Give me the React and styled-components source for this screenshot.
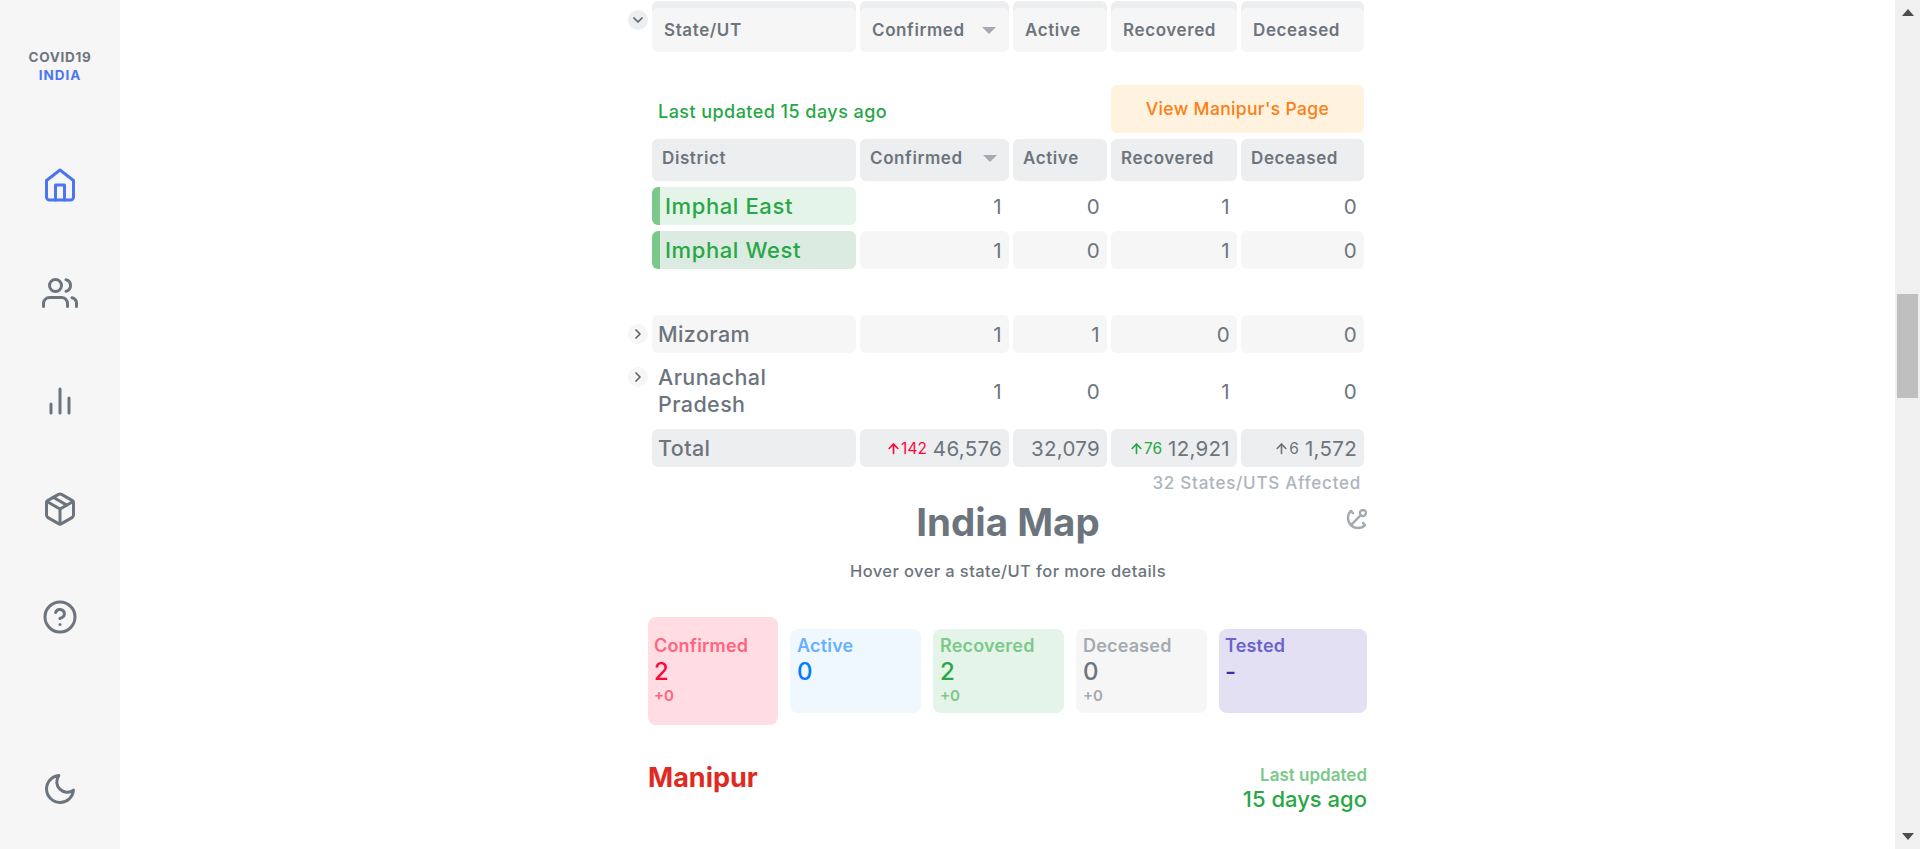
import styled, { createGlobalStyle } from "styled-components";

const GlobalStyle = createGlobalStyle`
  html, body {
    margin: 0;
    padding: 0;
    height: 100%;
    overflow: hidden;
    background: #fff;
  }
  * { box-sizing: border-box; }
  body {
    font-family: Inter, "Noto Sans", sans-serif;
    color: #6c757d;
  }
`;

const Page = styled.div`
  display: flex;
  width: 1920px;
  height: 849px;
  overflow: hidden;
`;

/* sidebar */
const Sidebar = styled.aside`
  flex: none;
  width: 120px;
  height: 100%;
  background: #f6f6f7;
  display: flex;
  flex-direction: column;
  align-items: center;
  padding: 48px 0 6px;
`;

const Logo = styled.div`
  height: 36px;
  margin-bottom: 47px;
  text-align: center;
  font-size: 13.5px;
  line-height: 18px;
  font-weight: 700;
  letter-spacing: 0.7px;
  color: #6c757d;
  span {
    display: block;
    letter-spacing: 1px;
    color: #4c75f2;
  }
`;

const NavItem = styled.div`
  flex: none;
  height: 108px;
  display: flex;
  align-items: center;
  justify-content: center;
  color: ${(p) => (p.$active ? "#4c75f2" : "#6c757d")};
  margin-top: ${(p) => (p.$bottom ? "auto" : "0")};
`;

const Icon = ({ size = 36, children, rotate, weight = 2 }) => (
  <svg
    width={size}
    height={size}
    viewBox="0 0 24 24"
    fill="none"
    stroke="currentColor"
    strokeWidth={weight}
    strokeLinecap="round"
    strokeLinejoin="round"
    transform={rotate ? `rotate(${rotate})` : undefined}
  >
    {children}
  </svg>
);

/* main column */
const Main = styled.main`
  flex: 1;
  min-width: 0;
  padding-left: 508px;
`;

const Row = styled.div`
  display: grid;
  grid-template-columns: 20px 204px 149px 94px 126px 123px;
  column-gap: 4px;
  width: 736px;
  margin-top: ${(p) => p.$top || 0}px;
  height: ${(p) => p.$height}px;
`;

const Toggle = styled.div`
  width: 20px;
  height: 20px;
  margin-top: ${(p) => p.$top || 0}px;
  border-radius: 50%;
  background: ${(p) => (p.$open ? "#edeef0" : "#f6f6f7")};
  color: #5b636b;
  display: flex;
  align-items: center;
  justify-content: center;
`;

const StickyCell = styled.div`
  background: #edeef0;
  border-radius: 6px;
  padding-top: 7px;
  height: 100%;
`;

const StickyInner = styled.div`
  height: 100%;
  background: #f6f6f7;
  border-radius: 6px;
  display: flex;
  align-items: center;
  justify-content: space-between;
  padding: 0 12px;
  font-size: 17px;
  font-weight: 600;
  letter-spacing: 0.6px;
  color: #6c757d;
`;

const HeadCell = styled.div`
  background: #edeef0;
  border-radius: 6px;
  display: flex;
  align-items: center;
  justify-content: space-between;
  padding: 0 11px 4px 10px;
  font-size: 17px;
  font-weight: 600;
  letter-spacing: 0.6px;
  color: #6c757d;
`;

const SortCaret = styled.i`
  width: 0;
  height: 0;
  margin-right: 1px;
  border-left: 7px solid transparent;
  border-right: 7px solid transparent;
  border-top: 7px solid #a5aab0;
`;

const NameCell = styled.div`
  border-radius: 6px;
  display: flex;
  align-items: center;
  padding: 0 6px;
  font-size: 21.5px;
  line-height: 27px;
  letter-spacing: 0.4px;
  font-weight: 500;
  color: #6c757d;
  background: ${(p) => p.$bg || "transparent"};
`;

const DistrictCell = styled(NameCell)`
  border-left: 8px solid #7bc98a;
  padding-left: 5px;
  font-size: 22px;
  letter-spacing: 0.6px;
  color: #28a745;
  background: ${(p) => p.$bg};
`;

const NumCell = styled.div`
  border-radius: 6px;
  display: flex;
  align-items: center;
  justify-content: flex-end;
  gap: 6px;
  padding: 0 7px;
  font-size: 20.5px;
  letter-spacing: 0.3px;
  font-weight: 400;
  color: #6c757d;
  background: ${(p) => p.$bg || "transparent"};
`;

const Delta = styled.span`
  display: flex;
  align-items: center;
  font-size: 15.5px;
  letter-spacing: 0;
  color: ${(p) => p.$color};
  svg {
    margin-right: 1px;
  }
`;

const UpdatedLine = styled.div`
  grid-column: 2 / span 3;
  align-self: center;
  padding: 4px 0 0 6px;
  font-size: 18px;
  font-weight: 500;
  color: #28a745;
  letter-spacing: 0.45px;
`;

const PageButton = styled.div`
  grid-column: 5 / span 2;
  background: #fff3e0;
  border-radius: 6px;
  display: flex;
  align-items: center;
  justify-content: center;
  padding-bottom: 2px;
  font-size: 17.5px;
  font-weight: 500;
  letter-spacing: 0.35px;
  color: #fd7e14;
`;

const Affected = styled.div`
  width: 736px;
  height: 24px;
  padding-right: 3px;
  margin-top: 4px;
  text-align: right;
  font-size: 17px;
  line-height: 24px;
  font-weight: 500;
  letter-spacing: 0.75px;
  color: #adb5bd;
`;

const MapHead = styled.div`
  position: relative;
  width: 720px;
  margin-left: 20px;
  text-align: center;
`;

const MapTitle = styled.h1`
  margin: 0;
  padding-top: 5px;
  font-size: 38.5px;
  line-height: 44px;
  font-weight: 700;
  color: #6c757d;
`;

const AnchorBtn = styled.div`
  position: absolute;
  right: -2px;
  top: 11px;
  color: #a5aab0;
  display: flex;
`;

const Hint = styled.div`
  margin-top: 17px;
  font-size: 16.5px;
  line-height: 20px;
  font-weight: 500;
  letter-spacing: 0.4px;
  color: #6c757d;
`;

const Cards = styled.div`
  display: flex;
  align-items: center;
  gap: 12px;
  width: 719px;
  height: 108px;
  margin: 36px 0 0 20px;
`;

const Card = styled.div`
  flex: 0 0 ${(p) => (p.$wide ? 148 : p.$big ? 130 : 131)}px;
  height: ${(p) => (p.$big ? 108 : 84)}px;
  padding: ${(p) => (p.$big ? 19 : 7)}px 6px 0 ${(p) => (p.$big || p.$wide ? 6 : 7)}px;
  border-radius: 8px;
  background: ${(p) => p.$bg};
`;

const CardLabel = styled.div`
  font-size: 18px;
  line-height: 20px;
  font-weight: 600;
  letter-spacing: 0.2px;
  color: ${(p) => p.$color};
`;

const CardValue = styled.div`
  font-size: 24px;
  line-height: 28px;
  margin-top: 2px;
  font-weight: 500;
  color: ${(p) => p.$color};
`;

const CardDelta = styled.div`
  font-size: 15px;
  line-height: 20px;
  font-weight: 600;
  color: ${(p) => p.$color};
`;

const StateRow = styled.div`
  display: flex;
  justify-content: space-between;
  align-items: flex-start;
  width: 719px;
  margin: 39px 0 0 20px;
`;

const StateName = styled.h2`
  margin: -3px 0 0;
  font-size: 27px;
  line-height: 34px;
  font-weight: 700;
  color: #e0291f;
`;

const Updated = styled.div`
  text-align: right;
  font-size: 17px;
  line-height: 22px;
  font-weight: 600;
  color: #7bc98a;
  strong {
    display: block;
    font-size: 22px;
    line-height: 26px;
    font-weight: 500;
    color: #28a745;
  }
`;

/* scrollbar drawn from the screenshot */
const ScrollTrack = styled.div`
  flex: none;
  width: 25px;
  height: 100%;
  background: #f0f0f0;
  display: flex;
  flex-direction: column;
  align-items: center;
  padding-top: 9px;
`;

const ArrowUpTip = styled.i`
  width: 0;
  height: 0;
  border-left: 6px solid transparent;
  border-right: 6px solid transparent;
  border-bottom: 7px solid #4d4d4d;
`;

const ArrowDownTip = styled.i`
  width: 0;
  height: 0;
  margin-top: auto;
  margin-bottom: 9px;
  border-left: 6px solid transparent;
  border-right: 6px solid transparent;
  border-top: 7px solid #4d4d4d;
`;

const Thumb = styled.div`
  width: 21px;
  height: 104px;
  margin-top: 278px;
  background: #bfbfbf;
`;

const Chevron = ({ open }) => (
  <svg width="16" height="16" viewBox="0 0 24 24" fill="none" stroke="currentColor" strokeWidth="2.6" strokeLinecap="round" strokeLinejoin="round">
    <polyline points={open ? "6 9 12 15 18 9" : "9 6 15 12 9 18"} />
  </svg>
);

const SmallUp = ({ size = 13 }) => (
  <svg width={size} height={size} viewBox="0 0 24 24" fill="none" stroke="currentColor" strokeWidth="3" strokeLinecap="round" strokeLinejoin="round">
    <line x1="12" y1="21" x2="12" y2="4" />
    <polyline points="4 12 12 4 20 12" />
  </svg>
);

const districts = [
  { name: "Imphal East", nameBg: "#e4f4e8", numBg: "transparent" },
  { name: "Imphal West", nameBg: "#dcebe1", numBg: "#f6f6f7" },
];

const stats = [
  { label: "Confirmed", value: "2", delta: "+0", bg: "#ffdde3", soft: "#ff6480", strong: "#ff073a", big: true },
  { label: "Active", value: "0", bg: "#eff7ff", soft: "#66b0ff", strong: "#007bff" },
  { label: "Recovered", value: "2", delta: "+0", bg: "#e4f4e8", soft: "#7bc98a", strong: "#28a745" },
  { label: "Deceased", value: "0", delta: "+0", bg: "#f6f6f7", soft: "#a5aab1", strong: "#6c757d" },
  { label: "Tested", value: "-", bg: "#e2e0f2", soft: "#6b63c9", strong: "#4327b5", wide: true },
];

const App = () => {
  return (
    <Page>
      <GlobalStyle />
      <Sidebar>
        <Logo>
          COVID19<span>INDIA</span>
        </Logo>
        <NavItem $active>
          <Icon>
            <path d="M3 9l9-7 9 7v11a2 2 0 0 1-2 2H5a2 2 0 0 1-2-2z" />
            <polyline points="9 22 9 12 15 12 15 22" />
          </Icon>
        </NavItem>
        <NavItem>
          <Icon>
            <path d="M17 21v-2a4 4 0 0 0-4-4H5a4 4 0 0 0-4 4v2" />
            <circle cx="9" cy="7" r="4" />
            <path d="M23 21v-2a4 4 0 0 0-3-3.87" />
            <path d="M16 3.13a4 4 0 0 1 0 7.75" />
          </Icon>
        </NavItem>
        <NavItem>
          <Icon>
            <line x1="18" y1="20" x2="18" y2="10" />
            <line x1="12" y1="20" x2="12" y2="4" />
            <line x1="6" y1="20" x2="6" y2="14" />
          </Icon>
        </NavItem>
        <NavItem>
          <Icon>
            <line x1="16.5" y1="9.4" x2="7.5" y2="4.21" />
            <path d="M21 16V8a2 2 0 0 0-1-1.73l-7-4a2 2 0 0 0-2 0l-7 4A2 2 0 0 0 3 8v8a2 2 0 0 0 1 1.73l7 4a2 2 0 0 0 2 0l7-4A2 2 0 0 0 21 16z" />
            <polyline points="3.27 6.96 12 12.01 20.73 6.96" />
            <line x1="12" y1="22.08" x2="12" y2="12" />
          </Icon>
        </NavItem>
        <NavItem>
          <Icon>
            <circle cx="12" cy="12" r="10" />
            <path d="M9.09 9a3 3 0 0 1 5.83 1c0 2-3 3-3 3" />
            <line x1="12" y1="17" x2="12.01" y2="17" />
          </Icon>
        </NavItem>
        <NavItem $bottom>
          <Icon>
            <path d="M21 12.79A9 9 0 1 1 11.21 3 7 7 0 0 0 21 12.79z" />
          </Icon>
        </NavItem>
      </Sidebar>

      <Main>
        <Row $top={1} $height={51}>
          <Toggle $open $top={9}>
            <Chevron open />
          </Toggle>
          <StickyCell>
            <StickyInner>State/UT</StickyInner>
          </StickyCell>
          <StickyCell>
            <StickyInner>
              Confirmed
              <SortCaret />
            </StickyInner>
          </StickyCell>
          <StickyCell>
            <StickyInner>Active</StickyInner>
          </StickyCell>
          <StickyCell>
            <StickyInner>Recovered</StickyInner>
          </StickyCell>
          <StickyCell>
            <StickyInner>Deceased</StickyInner>
          </StickyCell>
        </Row>

        <Row $top={33} $height={48}>
          <span />
          <UpdatedLine>Last updated 15 days ago</UpdatedLine>
          <PageButton>View Manipur's Page</PageButton>
        </Row>

        <Row $top={6} $height={42}>
          <span />
          <HeadCell>District</HeadCell>
          <HeadCell>
            Confirmed
            <SortCaret />
          </HeadCell>
          <HeadCell>Active</HeadCell>
          <HeadCell>Recovered</HeadCell>
          <HeadCell>Deceased</HeadCell>
        </Row>

        {districts.map((d) => (
          <Row key={d.name} $top={6} $height={38}>
            <span />
            <DistrictCell $bg={d.nameBg}>{d.name}</DistrictCell>
            <NumCell $bg={d.numBg}>1</NumCell>
            <NumCell $bg={d.numBg}>0</NumCell>
            <NumCell $bg={d.numBg}>1</NumCell>
            <NumCell $bg={d.numBg}>0</NumCell>
          </Row>
        ))}

        <Row $top={46} $height={38}>
          <Toggle $top={9}>
            <Chevron />
          </Toggle>
          <NameCell $bg="#f6f6f7">Mizoram</NameCell>
          <NumCell $bg="#f6f6f7">1</NumCell>
          <NumCell $bg="#f6f6f7">1</NumCell>
          <NumCell $bg="#f6f6f7">0</NumCell>
          <NumCell $bg="#f6f6f7">0</NumCell>
        </Row>

        <Row $top={4} $height={68}>
          <Toggle $top={10}>
            <Chevron />
          </Toggle>
          <NameCell>
            Arunachal
            <br />
            Pradesh
          </NameCell>
          <NumCell>1</NumCell>
          <NumCell>0</NumCell>
          <NumCell>1</NumCell>
          <NumCell>0</NumCell>
        </Row>

        <Row $top={4} $height={38}>
          <span />
          <NameCell $bg="#edeef0">Total</NameCell>
          <NumCell $bg="#edeef0">
            <Delta $color="#ff073a">
              <SmallUp />
              142
            </Delta>
            46,576
          </NumCell>
          <NumCell $bg="#edeef0">32,079</NumCell>
          <NumCell $bg="#edeef0">
            <Delta $color="#28a745">
              <SmallUp />
              76
            </Delta>
            12,921
          </NumCell>
          <NumCell $bg="#edeef0">
            <Delta $color="#6c757d">
              <SmallUp />6
            </Delta>
            1,572
          </NumCell>
        </Row>

        <Affected>32 States/UTS Affected</Affected>

        <MapHead>
          <MapTitle>India Map</MapTitle>
          <AnchorBtn>
            <Icon size={24} rotate={45} weight={2.4}>
              <circle cx="12" cy="5" r="3" />
              <line x1="12" y1="22" x2="12" y2="8" />
              <path d="M5 12H2a10 10 0 0 0 20 0h-3" />
            </Icon>
          </AnchorBtn>
          <Hint>Hover over a state/UT for more details</Hint>
        </MapHead>

        <Cards>
          {stats.map((s) => (
            <Card key={s.label} $bg={s.bg} $big={s.big} $wide={s.wide}>
              <CardLabel $color={s.soft}>{s.label}</CardLabel>
              <CardValue $color={s.strong}>{s.value}</CardValue>
              {s.delta && <CardDelta $color={s.soft}>{s.delta}</CardDelta>}
            </Card>
          ))}
        </Cards>

        <StateRow>
          <StateName>Manipur</StateName>
          <Updated>
            Last updated
            <strong>15 days ago</strong>
          </Updated>
        </StateRow>
      </Main>

      <ScrollTrack>
        <ArrowUpTip />
        <Thumb />
        <ArrowDownTip />
      </ScrollTrack>
    </Page>
  );
};

export default App;
